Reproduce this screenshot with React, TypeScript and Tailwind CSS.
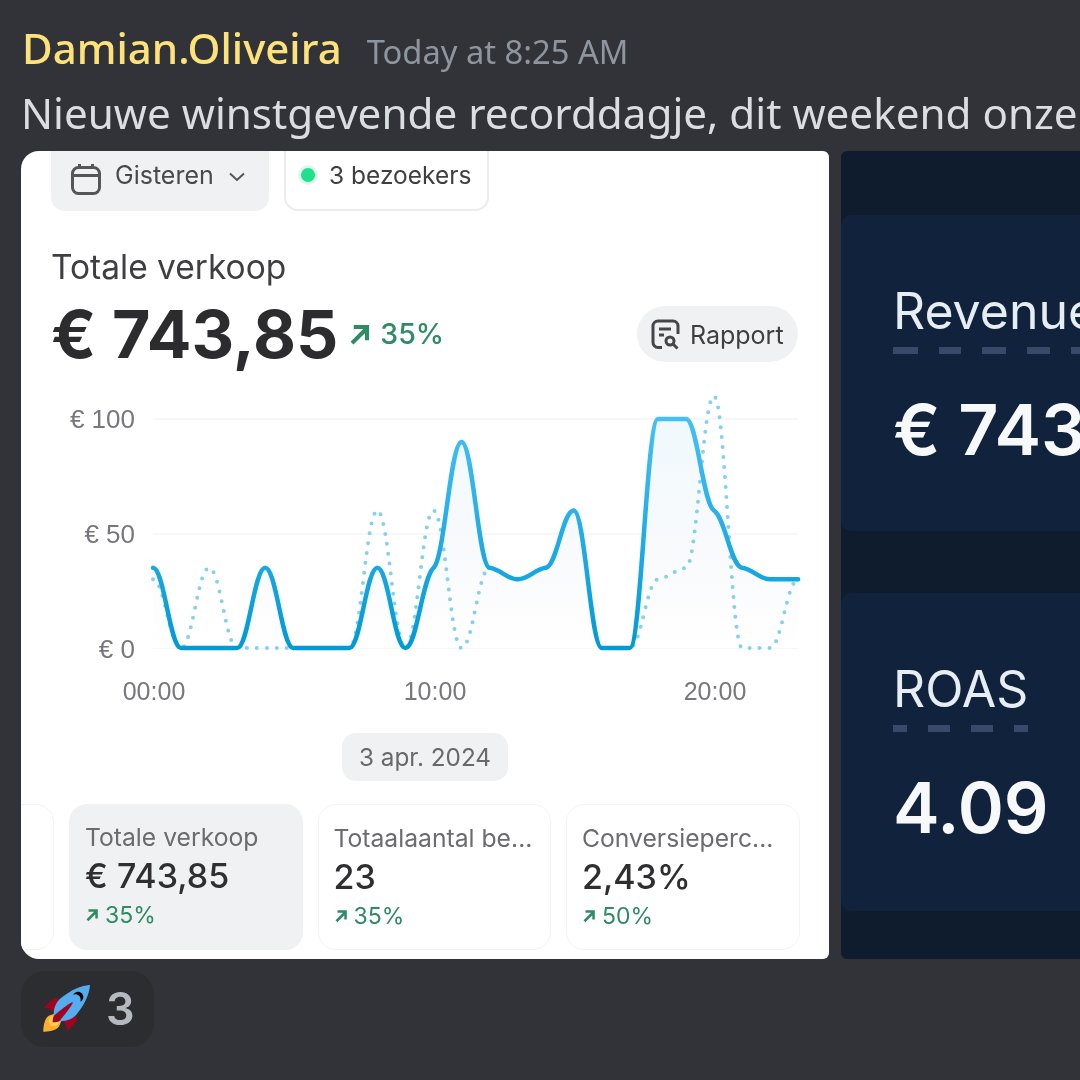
const solid = [35, 0, 0, 0, 35, 0, 0, 0, 35, 0, 35, 90, 35, 30, 35, 60, 0, 0, 100, 100, 60, 35, 30, 30];
const dotted = [30, 0, 35, 0, 0, 0, 0, 0, 60, 0, 60, 0, 35, 30, 35, 60, 0, 0, 30, 35, 110, 0, 0, 30];

const X0 = 132;
const STEP = 28.05;
const Y0 = 258;
const PER = 2.29;

// smooth line that nearly levels off at every data point, like the chart in the shot
function linePath(values: number[]) {
  const pts = values.map((v, i) => [X0 + i * STEP, Y0 - v * PER]);
  const n = pts.length;
  const slopes: number[] = [];
  for (let i = 0; i < n - 1; i++) slopes.push((pts[i + 1][1] - pts[i][1]) / STEP);
  const t: number[] = pts.map((_, i) => {
    if (i === 0 || i === n - 1) return 0;
    const a = slopes[i - 1];
    const b = slopes[i];
    if (a * b <= 0) return 0;
    return 0.3 * Math.sign(a) * Math.min(Math.abs(a), Math.abs(b));
  });
  const h = STEP * 0.4;
  let d = `M${pts[0][0]},${pts[0][1]}`;
  for (let i = 0; i < n - 1; i++) {
    d += `C${pts[i][0] + h},${pts[i][1] + t[i] * h} ${pts[i + 1][0] - h},${pts[i + 1][1] - t[i + 1] * h} ${pts[i + 1][0]},${pts[i + 1][1]}`;
  }
  return d;
}

function Chart() {
  const line = linePath(solid);
  const endX = X0 + 23 * STEP;
  return (
    <svg width="808" height="330" viewBox="0 0 808 330" className="block" style={{ fontFamily: '"Liberation Sans", sans-serif' }}>
      <defs>
        <linearGradient id="stroke" gradientUnits="userSpaceOnUse" x1="0" y1="29" x2="0" y2="258">
          <stop offset="0" stopColor="#45c0f5" />
          <stop offset="1" stopColor="#009ad6" />
        </linearGradient>
        <linearGradient id="fill" gradientUnits="userSpaceOnUse" x1="0" y1="29" x2="0" y2="258">
          <stop offset="0" stopColor="#f0f9fd" />
          <stop offset="0.6" stopColor="#f9fafc" />
          <stop offset="1" stopColor="#ffffff" />
        </linearGradient>
      </defs>
      {[29, 144, 258].map((y) => (
        <line key={y} x1="132" x2="777" y1={y} y2={y} stroke="#f3f4f6" strokeWidth="1.5" />
      ))}
      <path d={`${line}L${endX},258L${X0},258Z`} fill="url(#fill)" />
      <path d={linePath(dotted)} fill="none" stroke="#86d0ee" strokeWidth="4" strokeLinecap="round" strokeDasharray="0 10" />
      <path d={line} fill="none" stroke="url(#stroke)" strokeWidth="4.5" strokeLinejoin="round" strokeLinecap="round" />
      <g fill="#77777d" fontSize="26" textAnchor="end">
        <text x="114" y="38">€ 100</text>
        <text x="114" y="153">€ 50</text>
        <text x="114" y="268">€ 0</text>
      </g>
      <g fill="#77777d" fontSize="25" textAnchor="middle">
        <text x="133" y="310">00:00</text>
        <text x="414" y="310">10:00</text>
        <text x="694" y="310">20:00</text>
      </g>
    </svg>
  );
}

function TrendArrow({ size, className }: { size: number; className?: string }) {
  return (
    <svg width={size} height={size} viewBox="0 0 20 20" className={className} fill="none" stroke="#2e8b63" strokeWidth="3.6">
      <path d="M3.5 17.5L16 5M5 3.5H16.5V15" />
    </svg>
  );
}

function Stat({ title, value, delta, active }: { title: string; value: string; delta: string; active?: boolean }) {
  return (
    <div className={`w-[233.5px] h-[146px] shrink-0 rounded-[18px] pt-[18px] ${active ? "pl-[16px] bg-[#f0f1f3]" : "pl-[15px] bg-white border border-[#f2f3f4]"}`}>
      <div className="text-[24.7px] leading-[30px] text-[#6b6b70] whitespace-nowrap">{title}</div>
      <div className="text-[34px] leading-[42px] mt-[3px] font-medium text-[#2f2f31]">{value}</div>
      <div className="flex items-center gap-[6px] mt-[3px] text-[23px] leading-[30px] text-[#2e8b63]">
        <TrendArrow size={14} />
        {delta}
      </div>
    </div>
  );
}

function DarkPanel({ label, value, dashes }: { label: string; value: string; dashes: number[] }) {
  return (
    <div className="pl-[52px] blur-[0.6px]">
      <div className="text-[50px] leading-[56px] text-[#e6edf3]">{label}</div>
      <div className="flex gap-[21px] mt-[8px]">
        {dashes.map((w, i) => (
          <span key={i} style={{ width: w }} className="h-[7px] shrink-0 bg-[#38496a]" />
        ))}
      </div>
      <div className="mt-[38px] text-[70px] leading-[76px] font-semibold text-[#f6f8fa]">{value}</div>
    </div>
  );
}

export default function App() {
  return (
    <div className="w-[1080px] h-[1080px] overflow-hidden bg-[#313338] font-['Noto_Sans',sans-serif] blur-[0.5px]">
      <div className="flex items-baseline h-[76px] pl-[22px] pt-[20px] whitespace-nowrap">
        <span className="text-[42px] leading-[56px] font-medium text-[#fde27a]">Damian.Oliveira</span>
        <span className="ml-[25px] text-[32.7px] text-[#8f959e]">Today at 8:25 AM</span>
      </div>
      <div className="pl-[21px] mt-[7px] text-[42.2px] leading-[60px] text-[#dbdee1] whitespace-nowrap">
        Nieuwe winstgevende recorddagje, dit weekend onze
      </div>

      <div className="flex gap-[12px] pl-[21px] mt-[8px] h-[808px]">
        <div className="w-[808px] shrink-0 bg-white rounded-l-[18px] rounded-r-[6px] overflow-hidden font-['Inter',sans-serif]">
          <div className="flex gap-[15px] pl-[30px] h-[60px] text-[25px] text-[#4a4a4d]">
            <div className="flex items-center w-[218px] h-full pb-[10px] pl-[19px] rounded-b-[14px] bg-[#f0f1f3]">
              <svg className="mt-[6px]" width="32" height="32" viewBox="0 0 32 32" fill="none" stroke="#565659" strokeWidth="3">
                <rect x="2.5" y="4.5" width="27" height="26" rx="6" />
                <path d="M3 12.5H29M9.5 1V5M22.5 1V5" />
              </svg>
              <span className="ml-[13px]">Gisteren</span>
              <svg className="ml-[14px] mt-[2px]" width="18" height="18" viewBox="0 0 18 18" fill="none" stroke="#565659" strokeWidth="2">
                <path d="M2 5.5L9 12L16 5.5" />
              </svg>
            </div>
            <div className="flex items-center w-[205px] h-full pb-[10px] pl-[15px] rounded-b-[14px] bg-white border-2 border-t-0 border-[#ececee]">
              <span className="w-[14px] h-[14px] rounded-full bg-[#1fe08b] ring-[3px] ring-[#dcf9ec]" />
              <span className="ml-[14px] text-[24.5px] text-[#3f3f42]">3 bezoekers</span>
            </div>
          </div>

          <div className="pl-[30px] pt-[35px] text-[33.5px] leading-[42px] text-[#3f3f42]">Totale verkoop</div>
          <div className="flex items-center pl-[30px] pr-[31px] mt-[6px]">
            <span className="text-[66.2px] leading-[80px] font-bold text-[#2c2c2e]">€ 743,85</span>
            <TrendArrow size={23} className="ml-[10px]" />
            <span className="ml-[9px] text-[28.5px] font-medium text-[#2e8b63]">35%</span>
            <div className="ml-auto flex items-center w-[161px] h-[56px] pl-[13px] rounded-full bg-[#f0f1f3]">
              <svg width="31" height="31" viewBox="0 0 31 31" fill="none" stroke="#46464a" strokeWidth="3">
                <path d="M12 28.5H8a5 5 0 0 1-5-5V7a5 5 0 0 1 5-5h15a5 5 0 0 1 5 5v8" />
                <path d="M9 10H21M9 16H14" />
                <circle cx="20" cy="22" r="4" />
                <path d="M23 25L27.5 29.5" />
              </svg>
              <span className="ml-[9px] mt-[3px] text-[25px] text-[#3f3f42]">Rapport</span>
            </div>
          </div>

          <div className="mt-[16px]">
            <Chart />
          </div>

          <div className="flex justify-center mt-[13px]">
            <div className="px-[17px] h-[48px] flex items-center rounded-[14px] bg-[#f0f1f3] text-[24.3px] text-[#68686d]">3 apr. 2024</div>
          </div>

          <div className="flex gap-[15px] ml-[-200.5px] mt-[23px]">
            <div className="w-[233.5px] h-[146px] shrink-0 rounded-[18px] bg-white border border-[#f2f3f4]" />
            <Stat title="Totale verkoop" value="€ 743,85" delta="35%" active />
            <Stat title="Totaalaantal be..." value="23" delta="35%" />
            <Stat title="Conversieperc..." value="2,43%" delta="50%" />
          </div>
        </div>

        <div className="flex-1 min-w-0 overflow-hidden rounded-l-[6px] bg-[#0f1c2d] pt-[64px] font-['Inter',sans-serif] whitespace-nowrap">
          <div className="h-[316px] rounded-l-[10px] bg-[#10223c] pt-[68px]">
            <DarkPanel label="Revenue" value="€ 743,85" dashes={[25, 22, 24, 23, 24]} />
          </div>
          <div className="mt-[62px] h-[318px] rounded-l-[10px] bg-[#10223c] pt-[68px]">
            <DarkPanel label="ROAS" value="4.09" dashes={[14, 22, 22, 14]} />
          </div>
        </div>
      </div>

      <div className="ml-[21px] mt-[12px] w-[133px] h-[76px] rounded-[24px] bg-[#2b2d31] flex items-center pl-[21px]">
        <svg width="48" height="48" viewBox="0 0 36 36">
          <path fill="#A0041E" d="M1 17l8-7 16 1 1 16-7 8s.001-5.999-6-12-12-6-12-6z" />
          <path fill="#FFAC33" d="M.973 35s-.036-7.979 2.985-11S15 21.187 15 21.187 14.999 29 11.999 32c-3 3-11.026 3-11.026 3z" />
          <circle fill="#FFCC4D" cx="8.999" cy="27" r="4" />
          <path fill="#55ACEE" d="M35.999 0s-10 0-22 10c-6 5-6 14-4 16s11 2 16-4c10-12 10-22 10-22z" />
          <path d="M26.999 5c-1.623 0-3.013.971-3.641 2.36.502-.227 1.055-.36 1.641-.36 2.209 0 4 1.791 4 4 0 .586-.133 1.139-.359 1.64 1.388-.627 2.359-2.017 2.359-3.64 0-2.209-1.791-4-4-4z" />
          <path fill="#A0041E" d="M8 28s0-4 1-5 13.001-10.999 14-10-9.001 13-10.001 14S8 28 8 28z" />
        </svg>
        <span className="ml-[16px] text-[45px] font-semibold text-[#b5bac1] font-['Inter',sans-serif]">3</span>
      </div>
    </div>
  );
}
